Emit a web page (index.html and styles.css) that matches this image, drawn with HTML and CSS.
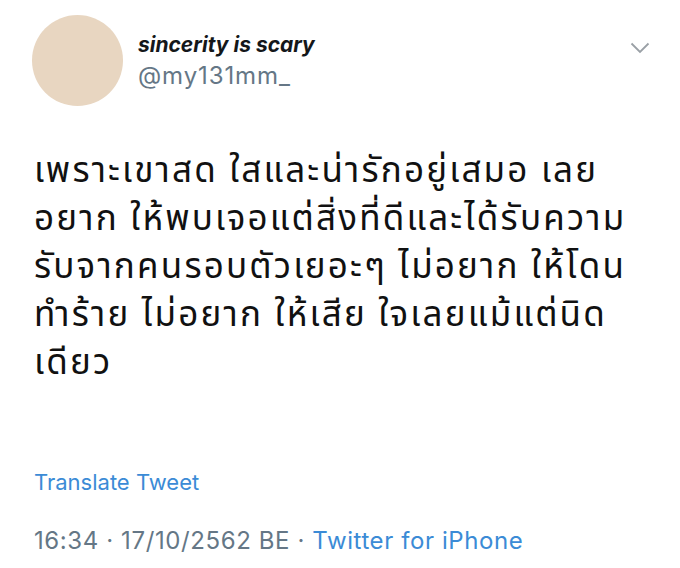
FILE: index.html
```html
<!DOCTYPE html>
<html lang="th">
<head>
<meta charset="utf-8">
<link rel="stylesheet" href="styles.css">
</head>
<body>
<div class="tweet">
  <div class="header">
    <div class="avatar"></div>
    <div class="names">
      <div class="name">sincerity is scary</div>
      <div class="handle">@my131mm_</div>
    </div>
    <svg class="chev" width="20" height="12" viewBox="0 0 20 12"><path d="M1.5 1.5 L10 10 L18.5 1.5" fill="none" stroke="#9aa0a6" stroke-width="1.8"/></svg>
  </div>
  <div class="body">เพราะเขาสด ใสและน่ารักอยู่เสมอ เลย<br>อยาก ให้พบเจอแต่สิ่งที่ดีและได้รับความ<br>รับจากคนรอบตัวเยอะๆ ไม่อยาก ให้โดน<br>ทำร้าย ไม่อยาก ให้เสีย ใจเลยแม้แต่นิด<br>เดียว</div>
  <div class="translate">Translate Tweet</div>
  <div class="meta">16:34 · 17/10/2562 BE · <span class="link">Twitter for iPhone</span></div>
</div>
</body>
</html>
```
FILE: styles.css
```css
html, body {
  margin: 0;
  background: #ffffff;
}
.tweet {
  width: 680px;
  height: 568px;
  box-sizing: border-box;
  padding: 15px 30px 0 34px;
  font-family: Inter, "Liberation Sans", sans-serif;
  color: #14171a;
}
.header {
  display: flex;
  align-items: flex-start;
  margin-left: -2px;
}
.avatar {
  width: 91px;
  height: 91px;
  border-radius: 50%;
  background: #e8d6c1;
  flex: none;
}
.names {
  margin-left: 15px;
  padding-top: 15px;
  flex: 1;
}
.name {
  font-weight: 700;
  font-style: italic;
  font-size: 21px;
  line-height: 30px;
}
.handle {
  font-size: 24px;
  line-height: 32px;
  letter-spacing: 0.9px;
  color: #657786;
}
.chev {
  margin-top: 27px;
}
.body {
  margin-top: 42px;
  font-family: "Noto Sans Thai", "Noto Sans", "DejaVu Sans", sans-serif;
  font-size: 35px;
  line-height: 48px;
  letter-spacing: 2.2px;
  color: #111;
}
.translate {
  margin-top: 80px;
  font-size: 22px;
  line-height: 28px;
  color: #3b8bd6;
}
.meta {
  margin-top: 29px;
  font-size: 24px;
  line-height: 32px;
  letter-spacing: 0.6px;
  color: #657786;
}
.link {
  color: #3b8bd6;
}
```
